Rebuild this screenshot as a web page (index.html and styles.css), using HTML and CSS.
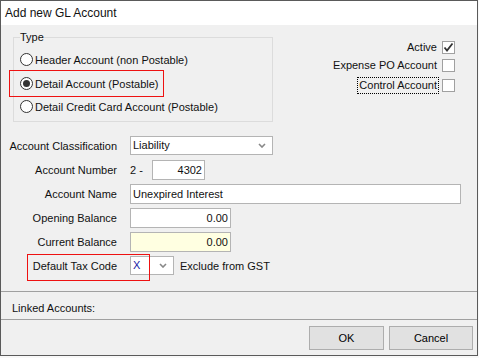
FILE: index.html
```html
<!DOCTYPE html>
<html lang="en">
<head>
    <meta charset="UTF-8">
    <title>Add new GL Account</title>
    <link rel="stylesheet" href="styles.css">
</head>
<body>
    <div class="window">
        <div class="titlebar">Add new GL Account</div>

        <div class="content">
            <div class="top">
                <fieldset class="type-group">
                    <legend>Type</legend>
                    <div class="radio-list">
                        <div class="radio-row"><span class="radio"></span>Header Account (non Postable)</div>
                        <div class="radio-row highlight"><span class="radio checked"></span>Detail Account (Postable)</div>
                        <div class="radio-row"><span class="radio"></span>Detail Credit Card Account (Postable)</div>
                    </div>
                </fieldset>

                <div class="flags">
                    <div class="flag">Active
                        <span class="check">
                            <svg width="11" height="11" viewBox="0 0 11 11"><polyline points="1.5,5.5 4,8.5 9.5,1.5" fill="none" stroke="#333" stroke-width="1.8"/></svg>
                        </span>
                    </div>
                    <div class="flag">Expense PO Account <span class="check"></span></div>
                    <div class="flag flag-last"><span class="focus">Control Account</span><span class="check"></span></div>
                </div>
            </div>

            <div class="form">
                <div class="form-row">
                    <label>Account Classification</label>
                    <div class="select wide">
                        <span>Liability</span>
                        <svg class="chevron" width="8" height="5" viewBox="0 0 8 5"><polyline points="1,1 4,4 7,1" fill="none" stroke="#888" stroke-width="1.6"/></svg>
                    </div>
                </div>
                <div class="form-row">
                    <label>Account Number</label>
                    <div class="number-group">
                        <span class="prefix">2 -</span>
                        <div class="input short right">4302</div>
                    </div>
                </div>
                <div class="form-row">
                    <label>Account Name</label>
                    <div class="input name">Unexpired Interest</div>
                </div>
                <div class="form-row">
                    <label>Opening Balance</label>
                    <div class="input money right">0.00</div>
                </div>
                <div class="form-row">
                    <label>Current Balance</label>
                    <div class="input money right readonly">0.00</div>
                </div>
                <div class="form-row highlight-row">
                    <label>Default Tax Code</label>
                    <div class="tax-group">
                        <div class="select tax">
                            <span class="code">X</span>
                            <svg class="chevron" width="8" height="5" viewBox="0 0 8 5"><polyline points="1,1 4,4 7,1" fill="none" stroke="#888" stroke-width="1.6"/></svg>
                        </div>
                        <span class="tax-desc">Exclude from GST</span>
                    </div>
                </div>
            </div>
        </div>

        <div class="linked">Linked Accounts:</div>

        <div class="footer">
            <button class="btn ok">OK</button>
            <button class="btn cancel">Cancel</button>
        </div>
    </div>
</body>
</html>
```

FILE: styles.css
```css
* {
    box-sizing: border-box;
}

body {
    margin: 0;
    background-color: #f8f8f8;
    font-family: "Liberation Sans", Arial, sans-serif;
    font-size: 11px;
    color: #111;
}

.window {
    width: 478px;
    height: 356px;
    border: 1px solid #5a5a5a;
    background-color: #f0f0f0;
    display: flex;
    flex-direction: column;
}

.titlebar {
    height: 24px;
    line-height: 24px;
    padding-left: 4px;
    background-color: #fff;
    font-size: 12px;
}

.content {
    padding: 5px 0 0 12px;
}

.top {
    display: flex;
}

/* Type group box */
.type-group {
    width: 260px;
    margin: 0;
    padding: 0 6px 2px 6px;
    border: 1px solid #dcdcdc;
}

.type-group legend {
    padding: 0;
    line-height: 14px;
}

.radio-list {
    padding-top: 4px;
}

.radio-row {
    height: 23.5px;
    display: flex;
    align-items: center;
}

/* red marker drawn round the selected option */
.radio-row.highlight {
    width: 155px;
    height: 27px;
    margin: -1.5px 0 -2px -11px;
    padding-left: 10px;
    border: 1px solid #ee1111;
}

.radio {
    width: 13px;
    height: 13px;
    margin-right: 2px;
    border: 1px solid #333;
    border-radius: 50%;
    background-color: #fff;
    display: flex;
    align-items: center;
    justify-content: center;
}

.radio.checked::before {
    content: '';
    width: 7px;
    height: 7px;
    border-radius: 50%;
    background-color: #333;
}

/* Right hand check boxes */
.flags {
    flex: 1;
    display: flex;
    flex-direction: column;
    align-items: flex-end;
    padding-top: 8px;
    padding-right: 22px;
}

.flag {
    height: 18px;
    display: flex;
    align-items: center;
    gap: 5px;
}

.flag-last {
    margin-top: 2px;
    gap: 3px;
}

.check {
    width: 13px;
    height: 13px;
    border: 1px solid #a0a0a0;
    background-color: #fff;
    display: flex;
    align-items: center;
    justify-content: center;
}

.focus {
    border: 1px dotted #000;
    padding: 1px;
    line-height: 13px;
}

/* Form rows */
.form {
    margin-top: 12px;
}

.form-row {
    height: 24px;
    display: grid;
    grid-template-columns: 104px auto;
    column-gap: 13px;
    align-items: center;
}

.form-row label {
    display: flex;
    justify-content: flex-end;
    white-space: nowrap;
}

.input,
.select {
    height: 20px;
    border: 1px solid #b4b4b4;
    background-color: #fff;
    padding: 0 2px;
    line-height: 18px;
    white-space: nowrap;
}

.input.right {
    text-align: right;
}

.input.readonly {
    background-color: #ffffe1;
}

.select {
    height: 19px;
    line-height: 17px;
    display: flex;
    align-items: center;
    justify-content: space-between;
    padding-right: 6px;
}

.select.wide {
    width: 143px;
}

.select.tax {
    width: 44px;
}

.code {
    color: #1a1aa6;
}

.number-group,
.tax-group {
    display: flex;
    align-items: center;
}

.prefix {
    width: 22px;
}

.input.short {
    width: 53px;
}

.input.name {
    width: 331px;
}

.input.money {
    width: 101px;
}

.tax-desc {
    margin-left: 6px;
}

.highlight-row {
    position: relative;
}

.highlight-row::after {
    content: '';
    position: absolute;
    left: 14px;
    top: 0;
    width: 121px;
    height: 25px;
    border: 1px solid #ee1111;
}

/* Linked accounts strip */
.linked {
    margin-top: 13px;
    height: 29px;
    padding: 5px 0 0 11px;
    line-height: 22px;
    border-top: 1px solid #a0a0a0;
    border-bottom: 1px solid #a0a0a0;
}

/* Footer buttons */
.footer {
    flex: 1;
    display: flex;
    justify-content: flex-end;
    align-items: flex-start;
    gap: 5px;
    padding: 6px 4px 0 0;
}

.btn {
    height: 24px;
    border: 1px solid #adadad;
    background-color: #e1e1e1;
    font-family: inherit;
    font-size: 11px;
    color: #000;
}

.btn.ok {
    width: 75px;
}

.btn.cancel {
    width: 84px;
}
```
